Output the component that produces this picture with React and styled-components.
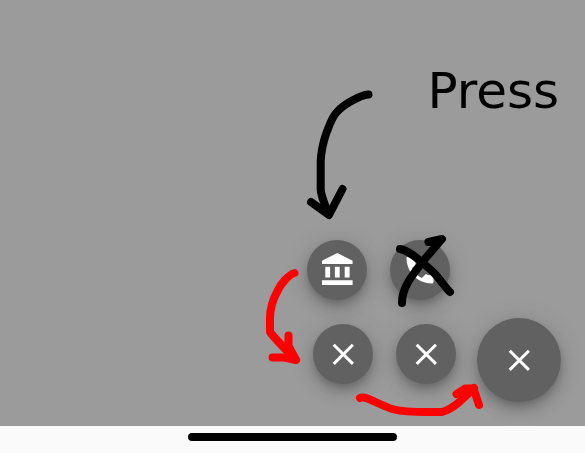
import React from "react";
import styled, { createGlobalStyle } from "styled-components";

const GlobalStyle = createGlobalStyle`
  * {
    box-sizing: border-box;
  }
  body {
    margin: 0;
    background: #9b9b9b;
    font-family: "DejaVu Sans", sans-serif;
  }
`;

const Screen = styled.div`
  position: relative;
  display: flex;
  flex-direction: column;
  min-height: 100vh;
  overflow: hidden;
`;

const Content = styled.main`
  flex: 1;
  display: flex;
  flex-direction: column;
  align-items: flex-end;
  justify-content: space-between;
  padding: 60px 24px 24px;
`;

const Caption = styled.h1`
  margin: 0;
  padding-right: 2px;
  font-size: 50px;
  font-weight: 400;
  line-height: 62px;
  color: #000;
`;

const Actions = styled.div`
  display: flex;
  flex-direction: column;
  align-items: flex-end;
  gap: 18px;
`;

const ShortcutRow = styled.div`
  display: flex;
  gap: 23px;
  padding-right: 111px;
`;

const DismissRow = styled.div`
  display: flex;
  align-items: center;
  gap: 21px;
`;

const DismissGroup = styled.div`
  display: flex;
  gap: 23px;
  padding-bottom: 12px;
`;

const RoundButton = styled.button`
  display: flex;
  align-items: center;
  justify-content: center;
  width: ${(p) => (p.$large ? 84 : 60)}px;
  height: ${(p) => (p.$large ? 84 : 60)}px;
  padding: 0;
  border: 0;
  border-radius: 50%;
  background: #616161;
  color: #fff;
  box-shadow:
    0 5px 8px -2px rgba(0, 0, 0, 0.2),
    0 9px 15px rgba(0, 0, 0, 0.14),
    0 2px 27px rgba(0, 0, 0, 0.12);
  cursor: pointer;
`;

const HomeBar = styled.footer`
  position: relative;
  display: flex;
  justify-content: center;
  padding: 7px 0 12px;
  background: #fafafa;
`;

const HomeIndicator = styled.div`
  width: 209px;
  height: 8px;
  border-radius: 4px;
  background: #000;
`;

const Ink = styled.svg`
  position: absolute;
  right: 0;
  bottom: 0;
  pointer-events: none;
  fill: none;
  stroke-linecap: round;
  stroke-linejoin: round;
`;

const CloseIcon = () => (
  <svg width="36" height="36" viewBox="0 0 36 36" aria-hidden="true">
    <path d="M8.7 8.7l19.2 19.2M27.900 8.700L8.700 27.900" stroke="currentColor" strokeWidth="3" fill="none" />
  </svg>
);

const BankIcon = () => (
  <svg width="36" height="36" viewBox="0 0 36 36" fill="currentColor" aria-hidden="true">
    <path d="M18.3 1L33.6 8.7V12H3V8.7zM6.3 14.7h4.8v10.8H6.3zM15.9 14.7h4.8v10.8h-4.8zM25.7 14.7h4.9v10.8h-4.9zM3 28.2h30.6V33H3z" />
  </svg>
);

const PhoneIcon = () => (
  <svg width="36" height="36" viewBox="0 0 24 24" fill="currentColor" aria-hidden="true">
    <path d="M6.62 10.79c1.44 2.83 3.76 5.14 6.59 6.59l2.2-2.2c.27-.27.67-.36 1.02-.24 1.12.37 2.33.57 3.57.57.55 0 1 .45 1 1V20c0 .55-.45 1-1 1-9.39 0-17-7.61-17-17 0-.55.45-1 1-1h3.5c.55 0 1 .45 1 1 0 1.25.2 2.45.57 3.57.11.35.03.74-.25 1.02l-2.2 2.2z" />
  </svg>
);

const Annotations = () => (
  <Ink width="585" height="453" viewBox="0 0 585 453" aria-hidden="true">
    <g stroke="#000" strokeWidth="8">
      <path d="M368.500 94.500C360 95 343 105 337 112C331 118 329 127 326 134C322 146 321 155 320.700 161V189C321 197 325 203 327.500 213" />
      <path d="M311 202L329 215L342.500 189" />
      <path d="M400 249C411 251 421 262 431 270C439 277 443 285 450 292" />
      <path d="M402 303C402 286 413 275 424 260L442 239L428.500 242" />
    </g>
    <g stroke="#f00" strokeWidth="8">
      <path d="M294.500 273C288 275 281 284 278 290C273 299 270 307 270 318V332C276 340 286 350 296 360" />
      <path d="M288.500 335.500V346L296 360L284 357.500H272.500M288 346L291 356" />
      <path d="M360 398C366 395 378 405 394 409.500C407 413 424 412 442 412C453 409 462 400 474 388" />
      <path d="M456.500 394L465 388.500H473.500L479 405M461 393.500L472 389" />
    </g>
  </Ink>
);

export default function App() {
  return (
    <>
      <GlobalStyle />
      <Screen>
        <Content>
          <Caption>Press</Caption>
          <Actions>
            <ShortcutRow>
              <RoundButton type="button" aria-label="Bank">
                <BankIcon />
              </RoundButton>
              <RoundButton type="button" aria-label="Call">
                <PhoneIcon />
              </RoundButton>
            </ShortcutRow>
            <DismissRow>
              <DismissGroup>
                <RoundButton type="button" aria-label="Close first">
                  <CloseIcon />
                </RoundButton>
                <RoundButton type="button" aria-label="Close second">
                  <CloseIcon />
                </RoundButton>
              </DismissGroup>
              <RoundButton type="button" $large aria-label="Close menu">
                <CloseIcon />
              </RoundButton>
            </DismissRow>
          </Actions>
        </Content>
        <HomeBar>
          <HomeIndicator />
        </HomeBar>
        <Annotations />
      </Screen>
    </>
  );
}
